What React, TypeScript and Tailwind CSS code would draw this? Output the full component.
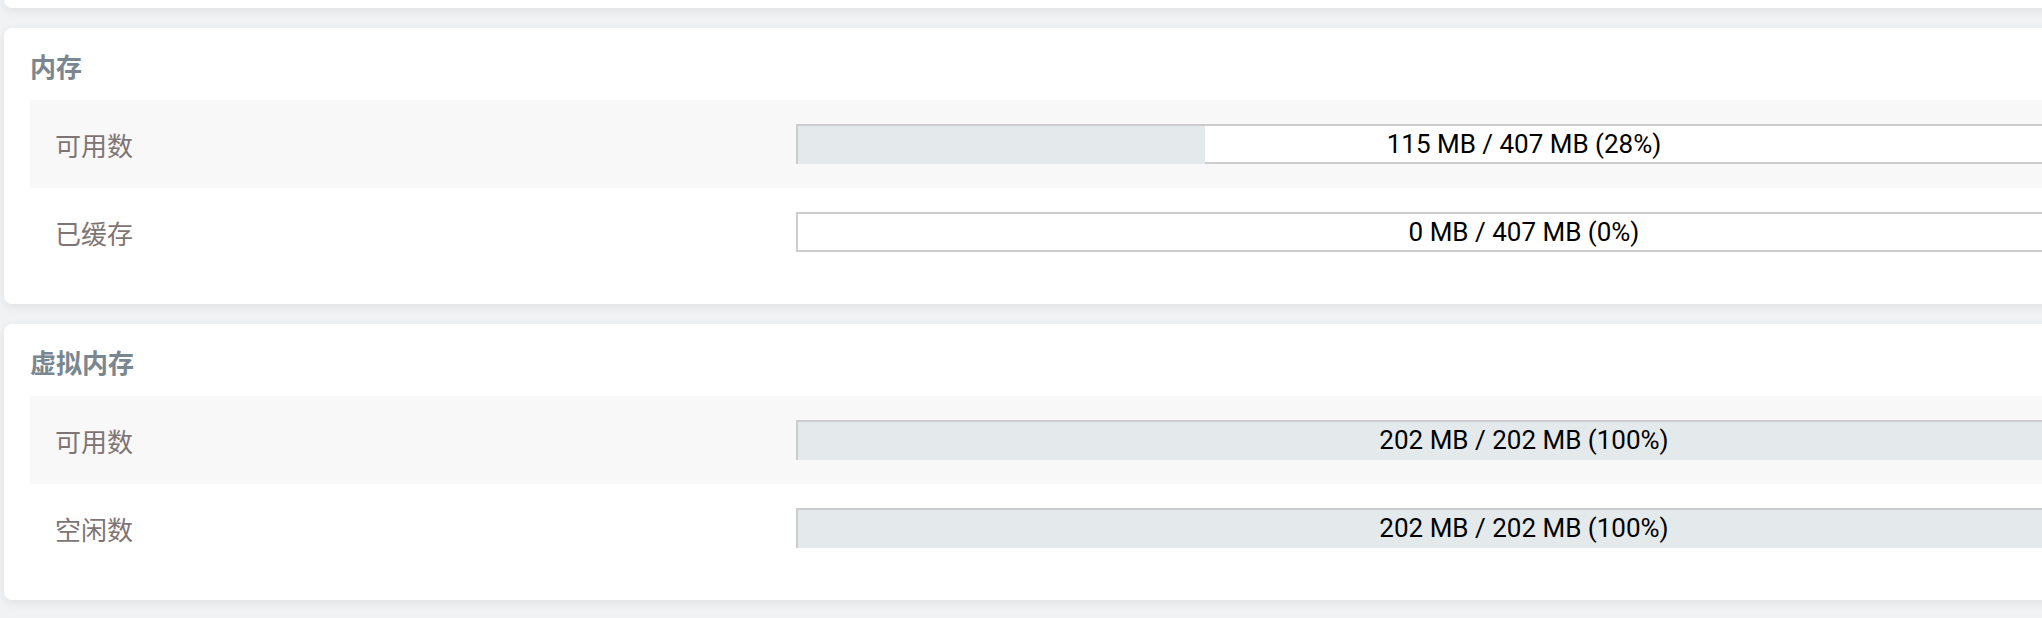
import React from "react";

type Row = { label: string; text: string; pct: number };
type Section = { title: string; rows: Row[] };

const sections: Section[] = [
  {
    title: "内存",
    rows: [
      { label: "可用数", text: "115 MB / 407 MB (28%)", pct: 28 },
      { label: "已缓存", text: "0 MB / 407 MB (0%)", pct: 0 },
    ],
  },
  {
    title: "虚拟内存",
    rows: [
      { label: "可用数", text: "202 MB / 202 MB (100%)", pct: 100 },
      { label: "空闲数", text: "202 MB / 202 MB (100%)", pct: 100 },
    ],
  },
];

function Bar({ text, pct }: { text: string; pct: number }) {
  return (
    <div className="relative h-[40px] w-[1456px] border-2 border-[#cccccc] bg-white">
      {pct > 0 && (
        <div className="h-[38px] bg-[#e4e9ec]" style={{ width: `${pct}%` }} />
      )}
      <div className="absolute inset-0 flex items-center justify-center text-[26px] leading-none text-black [font-family:Roboto,'Liberation_Sans',sans-serif]">
        {text}
      </div>
    </div>
  );
}

export default function App() {
  return (
    <div className="h-[618px] w-[2042px] overflow-hidden bg-[#f1f2f4] [font-family:'Noto_Sans_CJK_SC','Noto_Sans',sans-serif]">
      <div className="flex w-[2400px] flex-col gap-[20px] pl-[4px]">
        <div className="mt-[-40px] h-[48px] rounded-[8px] bg-white shadow-[0_3px_10px_rgba(0,0,0,0.07)]" />
        {sections.map((s) => (
          <div
            key={s.title}
            className="rounded-[8px] bg-white px-[26px] pt-[20px] pb-[28px] shadow-[0_3px_10px_rgba(0,0,0,0.07)]"
          >
            <div className="mb-[16px] h-[36px] text-[26px] font-semibold leading-[36px] text-[#7a8690]">
              {s.title}
            </div>
            <div className="flex flex-col">
              {s.rows.map((r, i) => (
                <div
                  key={r.label + i}
                  className={`flex h-[88px] items-center ${i % 2 === 0 ? "bg-[#f8f8f8]" : "bg-white"}`}
                >
                  <div className="w-[766px] shrink-0 pl-[25px] text-[26px] text-[#7f7474]">
                    {r.label}
                  </div>
                  <Bar text={r.text} pct={r.pct} />
                </div>
              ))}
            </div>
          </div>
        ))}
      </div>
    </div>
  );
}
